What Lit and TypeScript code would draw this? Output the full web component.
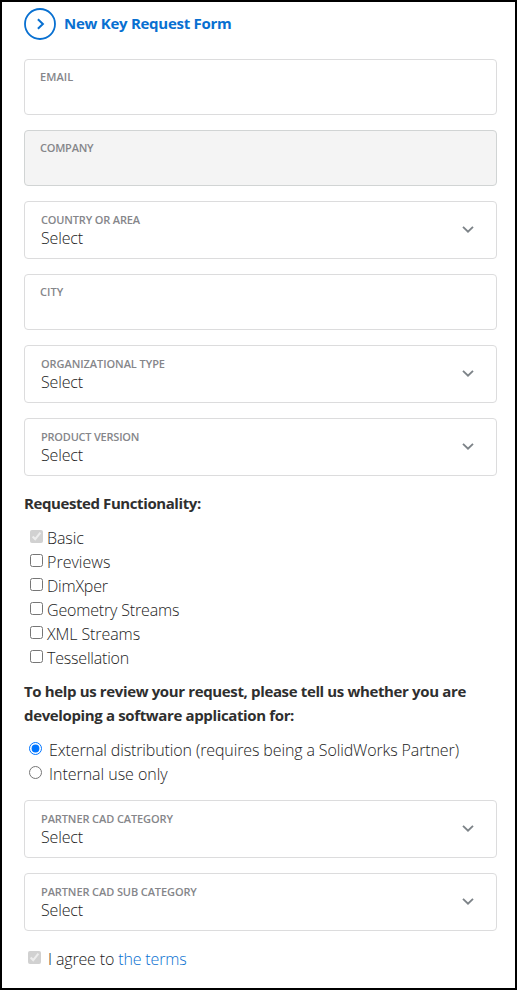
import { LitElement, html, css } from "lit";
import { customElement, property } from "lit/decorators.js";
import { classMap } from "lit/directives/class-map.js";

type Field = { label: string; kind: "input" | "select"; disabled?: boolean; tracking: number };

const CONTACT_FIELDS: Field[] = [
  { label: "EMAIL", kind: "input", tracking: 0.1 },
  { label: "COMPANY", kind: "input", disabled: true, tracking: -0.22 },
  { label: "COUNTRY OR AREA", kind: "select", tracking: -0.16 },
  { label: "CITY", kind: "input", tracking: 0.1 },
  { label: "ORGANIZATIONAL TYPE", kind: "select", tracking: -0.06 },
  { label: "PRODUCT VERSION", kind: "select", tracking: -0.22 },
];

const PARTNER_FIELDS: Field[] = [
  { label: "PARTNER CAD CATEGORY", kind: "select", tracking: -0.1 },
  { label: "PARTNER CAD SUB CATEGORY", kind: "select", tracking: -0.1 },
];

const FEATURES = [
  { name: "Basic", locked: true, tracking: -0.1 },
  { name: "Previews", locked: false, tracking: 0.03 },
  { name: "DimXper", locked: false, tracking: -0.2 },
  { name: "Geometry Streams", locked: false, tracking: -0.17 },
  { name: "XML Streams", locked: false, tracking: -0.08 },
  { name: "Tessellation", locked: false, tracking: -0.2 },
];

@customElement("form-field")
export class FormField extends LitElement {
  @property() label = "";
  @property() kind = "input";
  @property({ type: Boolean }) disabled = false;
  @property({ type: Number }) tracking = 0;

  static styles = css`
    :host { display: block; }
    .box {
      box-sizing: border-box;
      display: flex;
      justify-content: space-between;
      height: 56px;
      padding: 9px 22px 0 15px;
      border: 1px solid #dcdcdd;
      border-radius: 4px;
      background: #fff;
    }
    .select { height: 58px; padding: 10px 22px 0 16px; }
    .disabled { background: #f4f4f4; border-color: #d1d4d4; }
    .label {
      font-size: 11px;
      line-height: 16px;
      font-weight: 600;
      color: #85868a;
      white-space: nowrap;
    }
    .value { font-size: 16px; line-height: 20px; letter-spacing: -0.15px; color: #222; }
    .arrow { display: block; margin-top: 14px; }
  `;

  render() {
    const select = this.kind === "select";
    return html`<div class=${classMap({ box: true, select, disabled: this.disabled })}>
      <div>
        <div class="label" style="letter-spacing:${this.tracking}px">${this.label}</div>
        ${select ? html`<div class="value">Select</div>` : ""}
      </div>
      ${select
        ? html`<svg class="arrow" width="12" height="8" viewBox="0 0 12 8" fill="none" stroke="#7d8388" stroke-width="1.9">
            <path d="M1 0.9 6 5.6 11 0.9" />
          </svg>`
        : ""}
    </div>`;
  }
}

@customElement("app-root")
export class AppRoot extends LitElement {
  static styles = css`
    :host {
      display: block;
      font-family: "Open Sans", "Noto Sans", sans-serif;
      font-weight: 300;
      font-size: 16px;
      line-height: 24px;
      color: #222;
    }
    .frame {
      box-sizing: border-box;
      height: 990px;
      border: 2px solid #000;
      padding: 6px 18px 0 22px;
      background: #fff;
      white-space: nowrap;
    }
    .header { display: flex; align-items: flex-start; gap: 8px; height: 32px; color: #0870d1; }
    .icon { display: block; }
    .title { margin: 0; font-size: 15px; line-height: 30px; font-weight: 700; letter-spacing: -0.27px; }
    .fields { display: flex; flex-direction: column; gap: 15px; }
    .contact { margin-top: 19px; }
    .heading { margin: 0; font-size: 15px; line-height: 24px; font-weight: 700; color: #2f2f2f; }
    .functionality { margin-top: 15px; letter-spacing: -0.41px; }
    .question { margin-top: 10px; letter-spacing: -0.36px; }
    .features { margin-top: 10px; }
    .usage { margin-top: 10px; }
    .partner { margin-top: 15px; }
    .row { display: flex; align-items: flex-start; height: 24px; padding-left: 6px; gap: 4px; }
    .text { line-height: 26px; }
    .choice { padding-left: 5px; gap: 7px; }
    .terms { margin-top: 15px; padding-left: 4px; gap: 7px; }
    .mark { flex: none; width: 13px; height: 13px; margin: 5px 0 0; }
    .link { color: #0870d1; text-decoration: none; }
    .external { letter-spacing: -0.12px; }
    .internal { letter-spacing: -0.03px; }
    .agree { letter-spacing: -0.15px; }
  `;

  private fields(list: Field[]) {
    return list.map(
      (f) => html`<form-field .label=${f.label} .kind=${f.kind} .disabled=${!!f.disabled} .tracking=${f.tracking}></form-field>`
    );
  }

  render() {
    return html`<main class="frame">
      <header class="header">
        <svg class="icon" width="32" height="32" viewBox="0 0 32 32" fill="none" stroke="currentColor" stroke-width="2">
          <circle cx="16" cy="16" r="15" stroke-width="1.8" />
          <path d="M13.9 11.2 18.9 16 13.9 20.8" />
        </svg>
        <h1 class="title">New Key Request Form</h1>
      </header>
      <section class="fields contact">${this.fields(CONTACT_FIELDS)}</section>
      <h2 class="heading functionality">Requested Functionality:</h2>
      <section class="features">
        ${FEATURES.map(
          (f) => html`<label class="row">
            <input class="mark" type="checkbox" ?checked=${f.locked} ?disabled=${f.locked} />
            <span class="text" style="letter-spacing:${f.tracking}px">${f.name}</span>
          </label>`
        )}
      </section>
      <h2 class="heading question">To help us review your request, please tell us whether you are<br />developing a software application for:</h2>
      <section class="usage">
        <label class="row choice"><input class="mark" type="radio" name="usage" checked /><span class="text external">External distribution (requires being a SolidWorks Partner)</span></label>
        <label class="row choice"><input class="mark" type="radio" name="usage" /><span class="text internal">Internal use only</span></label>
      </section>
      <section class="fields partner">${this.fields(PARTNER_FIELDS)}</section>
      <div class="row terms">
        <input class="mark" type="checkbox" checked disabled />
        <span class="text agree">I agree to <a class="link" href="#">the terms</a></span>
      </div>
    </main>`;
  }
}
